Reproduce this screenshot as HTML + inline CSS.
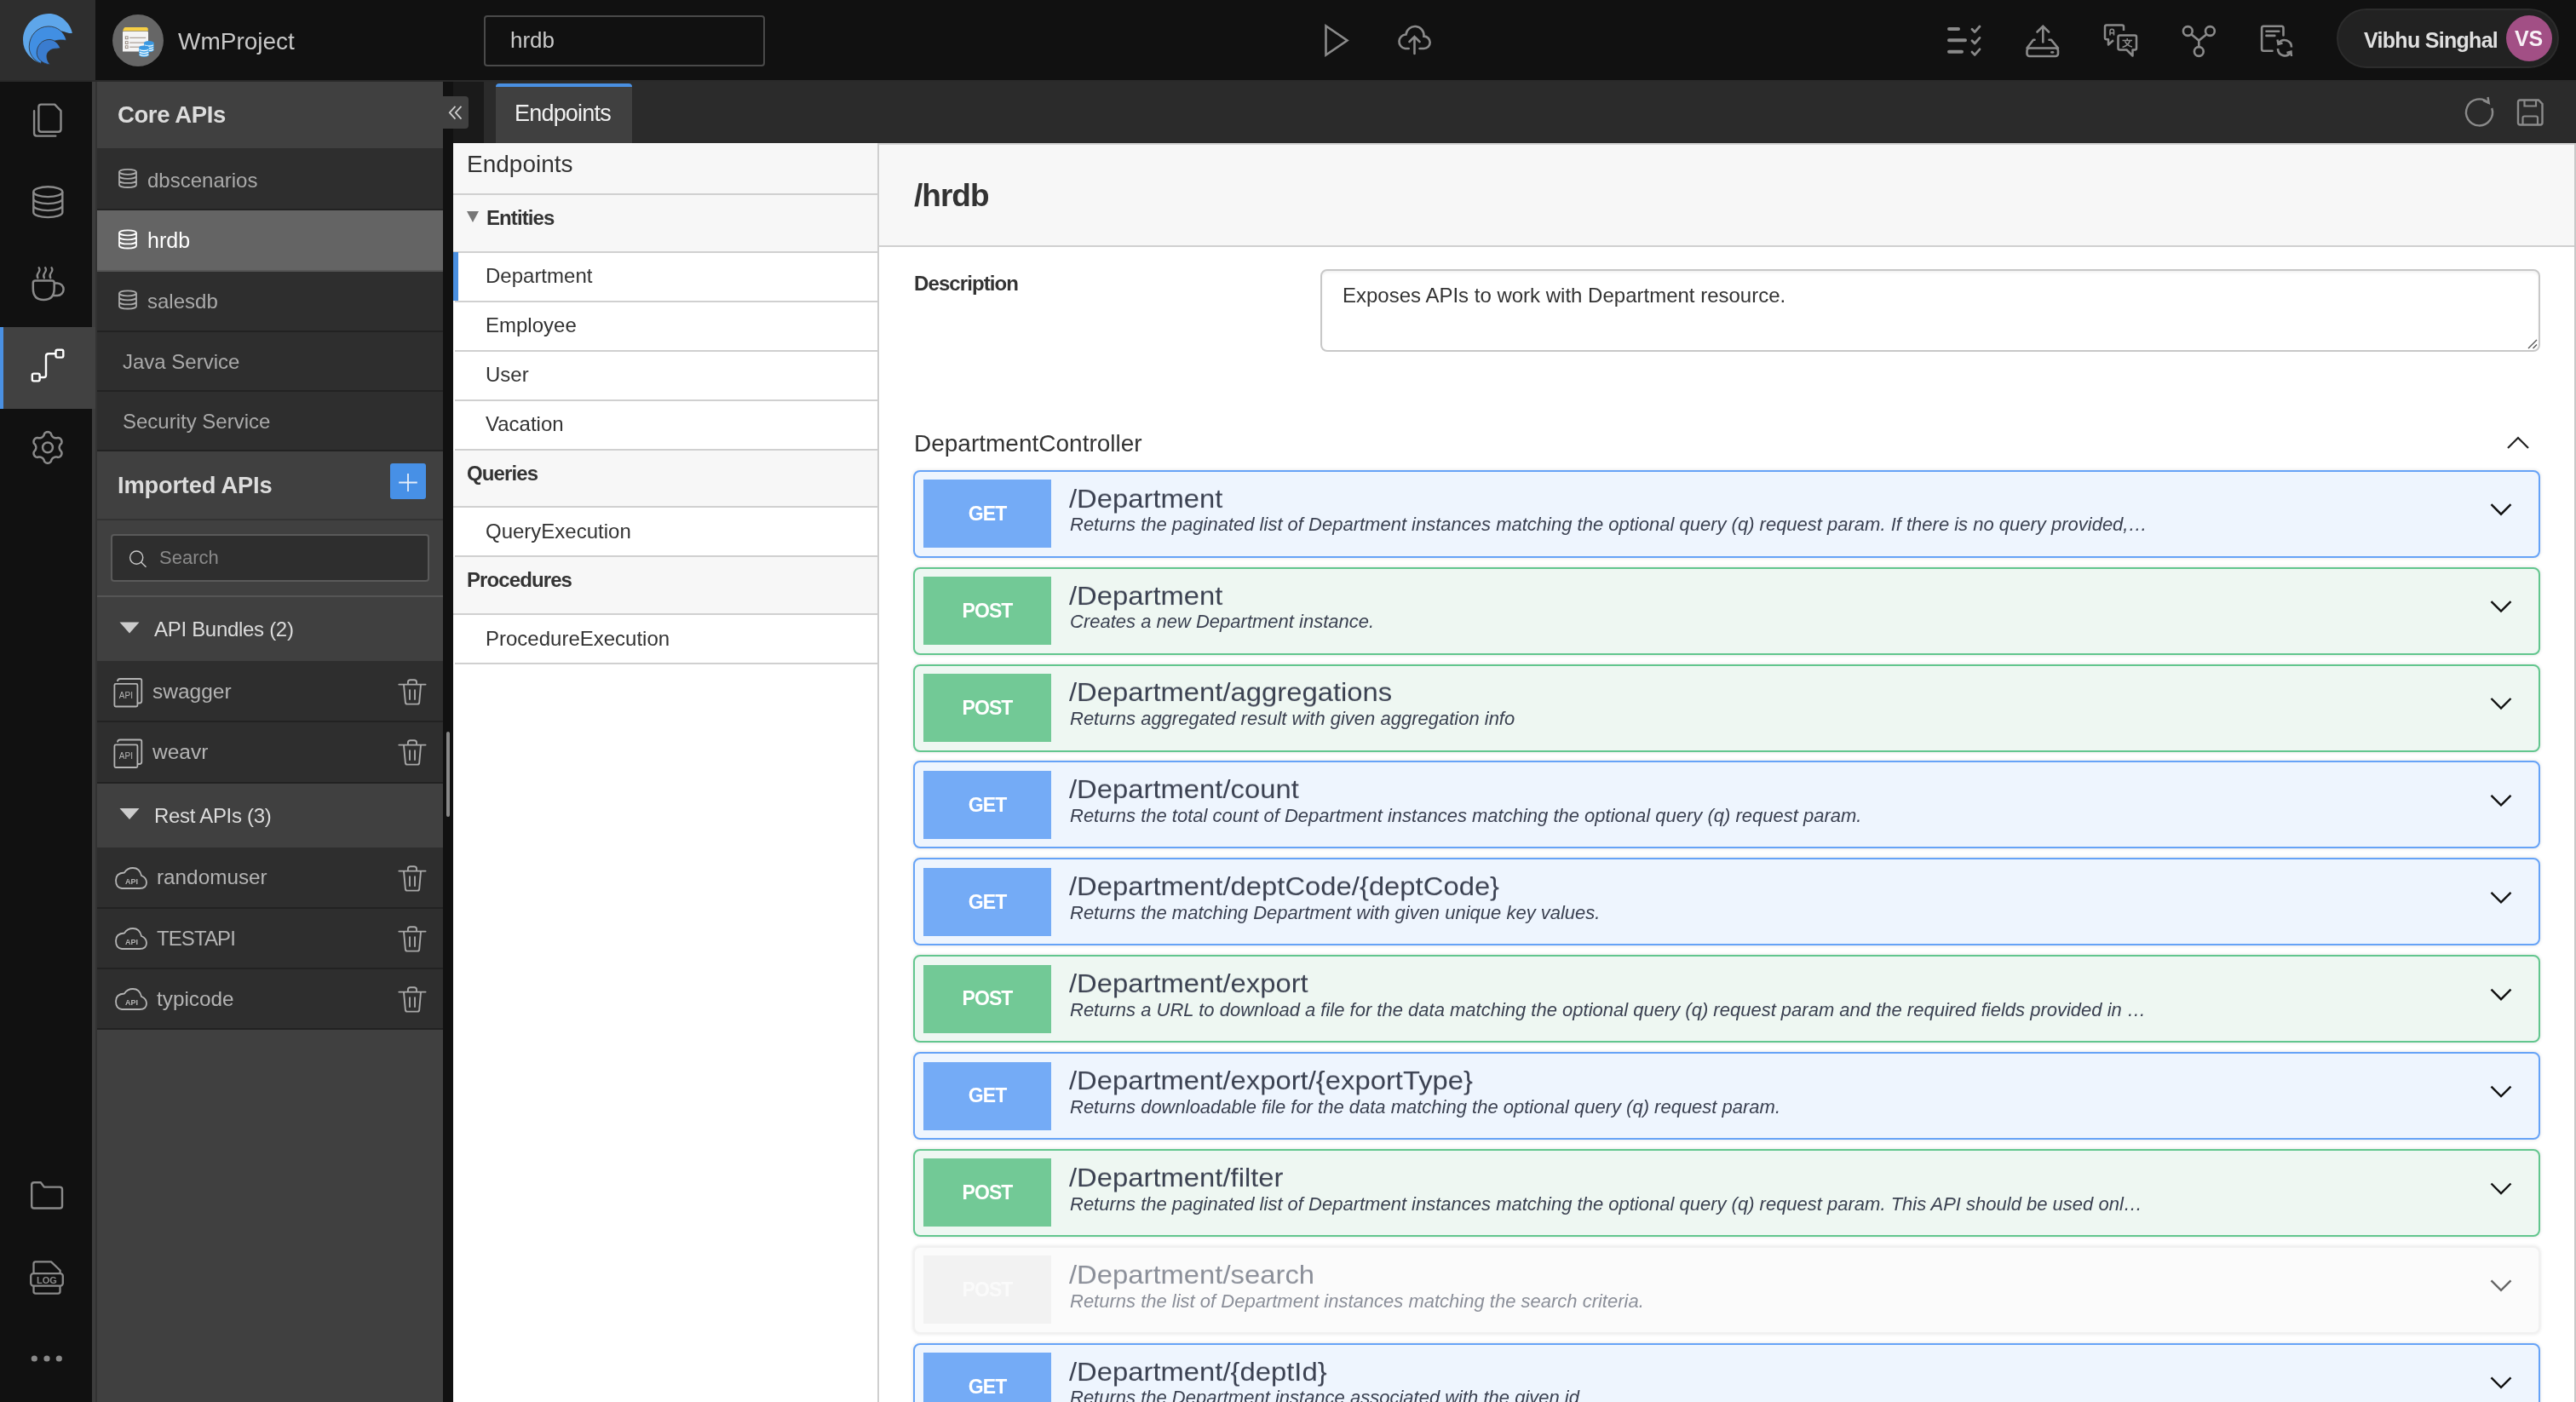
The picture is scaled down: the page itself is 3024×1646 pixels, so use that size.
<!DOCTYPE html>
<html><head><meta charset="utf-8">
<style>
*{margin:0;padding:0;box-sizing:border-box}
html,body{width:3024px;height:1646px;overflow:hidden;background:#111;font-family:"Liberation Sans",sans-serif}
.a{position:absolute}
svg{display:block}
.t{position:absolute;white-space:nowrap;line-height:1;will-change:transform}
</style></head><body>
<div class="a" style="left:0px;top:0px;width:3024px;height:94px;background:#111;"></div>
<div class="a" style="left:0px;top:94px;width:3024px;height:2px;background:#2a2a2a;"></div>
<div class="a" style="left:0px;top:0px;width:112px;height:94px;background:#2e2e2e;"></div>
<div class="a" style="left:132px;top:17px;width:60px;height:61px;border-radius:50%;background:#666"></div>
<div class="t" style="left:209px;top:35.3px;font-size:28px;color:#c8c8c8;font-weight:normal;letter-spacing:0px;font-style:normal;">WmProject</div>
<div class="a" style="left:568px;top:18px;width:330px;height:60px;border:2px solid #4a4a4a;border-radius:4px;background:#111"></div>
<div class="t" style="left:599px;top:34.2px;font-size:26px;color:#c8c8c8;font-weight:normal;letter-spacing:0px;font-style:normal;">hrdb</div>
<div class="a" style="left:2743px;top:10px;width:261px;height:70px;border-radius:35px;background:#222;border:2px solid #2c2c2c"></div>
<div class="t" style="left:2775px;top:35.1px;font-size:25px;color:#e0e0e0;font-weight:bold;letter-spacing:-0.7px;font-style:normal;">Vibhu Singhal</div>
<div class="a" style="left:2942px;top:18px;width:54px;height:54px;border-radius:50%;background:#a24f85"></div>
<div class="t" style="left:2951.5px;top:33.0px;font-size:25px;color:#f8f0f6;font-weight:bold;letter-spacing:-0.2px;font-style:normal;">VS</div>
<div class="a" style="left:0px;top:96px;width:108px;height:1550px;background:#111;"></div>
<div class="a" style="left:108px;top:96px;width:4px;height:1550px;background:#3d3d3d;"></div>
<div class="a" style="left:112px;top:96px;width:2px;height:1550px;background:#333;"></div>
<div class="a" style="left:0px;top:384px;width:112px;height:96px;background:#414141;"></div>
<div class="a" style="left:0px;top:384px;width:4px;height:96px;background:#4a90e2;"></div>
<div class="a" style="left:114px;top:96px;width:406px;height:1550px;background:#404040;"></div>
<div class="t" style="left:138px;top:121.0px;font-size:27.5px;color:#dcdcdc;font-weight:bold;letter-spacing:-0.4px;font-style:normal;">Core APIs</div>
<div class="a" style="left:114px;top:174px;width:406px;height:72px;background:#2e2e2e;"></div>
<div class="a" style="left:114px;top:247px;width:406px;height:70px;background:#646464;"></div>
<div class="a" style="left:114px;top:319px;width:406px;height:69px;background:#2e2e2e;"></div>
<div class="a" style="left:114px;top:390px;width:406px;height:68px;background:#2e2e2e;"></div>
<div class="a" style="left:114px;top:460px;width:406px;height:68px;background:#2e2e2e;"></div>
<div class="a" style="left:114px;top:245px;width:406px;height:2px;background:#222;"></div>
<div class="a" style="left:114px;top:388px;width:406px;height:2px;background:#222;"></div>
<div class="a" style="left:114px;top:458px;width:406px;height:2px;background:#222;"></div>
<div class="a" style="left:114px;top:528px;width:406px;height:2px;background:#222;"></div>
<div class="a" style="left:114px;top:317px;width:406px;height:2px;background:#555;"></div>
<div class="t" style="left:172.5px;top:199.7px;font-size:24px;color:#aaa;font-weight:normal;letter-spacing:0px;font-style:normal;">dbscenarios</div>
<div class="t" style="left:172.5px;top:269.8px;font-size:25px;color:#fff;font-weight:normal;letter-spacing:0px;font-style:normal;">hrdb</div>
<div class="t" style="left:172.5px;top:341.7px;font-size:24px;color:#aaa;font-weight:normal;letter-spacing:0px;font-style:normal;">salesdb</div>
<div class="t" style="left:144px;top:412.5px;font-size:24px;color:#aaa;font-weight:normal;letter-spacing:0px;font-style:normal;">Java Service</div>
<div class="t" style="left:144px;top:482.5px;font-size:24px;color:#aaa;font-weight:normal;letter-spacing:0px;font-style:normal;">Security Service</div>
<div class="a" style="left:114px;top:609px;width:406px;height:2px;background:#333;"></div>
<div class="t" style="left:138px;top:555.6px;font-size:27.3px;color:#dcdcdc;font-weight:bold;letter-spacing:-0.2px;font-style:normal;">Imported APIs</div>
<div class="a" style="left:458px;top:544px;width:42px;height:42px;border-radius:3px;background:#4790e6"></div>
<div class="a" style="left:130px;top:627px;width:374px;height:56px;border:2px solid #5a5a5a;border-radius:4px;background:#2e2e2e"></div>
<div class="t" style="left:186.5px;top:643.9px;font-size:22px;color:#8a8a8a;font-weight:normal;letter-spacing:0px;font-style:normal;">Search</div>
<div class="a" style="left:114px;top:699px;width:406px;height:2px;background:#555;"></div>
<div class="t" style="left:180.5px;top:727.0px;font-size:24px;color:#dcdcdc;font-weight:normal;letter-spacing:-0.3px;font-style:normal;">API Bundles (2)</div>
<div class="a" style="left:114px;top:776px;width:406px;height:70px;background:#2e2e2e;"></div>
<div class="a" style="left:114px;top:848px;width:406px;height:70px;background:#2e2e2e;"></div>
<div class="a" style="left:114px;top:846px;width:406px;height:2px;background:#222;"></div>
<div class="a" style="left:114px;top:918px;width:406px;height:2px;background:#222;"></div>
<div class="t" style="left:178.5px;top:799.5px;font-size:24.5px;color:#b4b4b4;font-weight:normal;letter-spacing:0px;font-style:normal;">swagger</div>
<div class="t" style="left:178.5px;top:870.8px;font-size:24.5px;color:#b4b4b4;font-weight:normal;letter-spacing:0px;font-style:normal;">weavr</div>
<div class="a" style="left:114px;top:995px;width:406px;height:70px;background:#2e2e2e;"></div>
<div class="a" style="left:114px;top:1066px;width:406px;height:70px;background:#2e2e2e;"></div>
<div class="a" style="left:114px;top:1137px;width:406px;height:71px;background:#2e2e2e;"></div>
<div class="a" style="left:114px;top:1065px;width:406px;height:2px;background:#222;"></div>
<div class="a" style="left:114px;top:1136px;width:406px;height:2px;background:#222;"></div>
<div class="a" style="left:114px;top:1207px;width:406px;height:2px;background:#222;"></div>
<div class="t" style="left:180.5px;top:946.2px;font-size:24px;color:#dcdcdc;font-weight:normal;letter-spacing:-0.3px;font-style:normal;">Rest APIs (3)</div>
<div class="t" style="left:184px;top:1018.4px;font-size:24.3px;color:#b4b4b4;font-weight:normal;letter-spacing:0px;font-style:normal;">randomuser</div>
<div class="t" style="left:184px;top:1090.2px;font-size:24px;color:#b4b4b4;font-weight:normal;letter-spacing:-0.9px;font-style:normal;">TESTAPI</div>
<div class="t" style="left:184px;top:1160.9px;font-size:24.3px;color:#b4b4b4;font-weight:normal;letter-spacing:0px;font-style:normal;">typicode</div>
<div class="a" style="left:520px;top:96px;width:12px;height:1550px;background:#111;"></div>
<div class="a" style="left:524px;top:859px;width:4px;height:100px;border-radius:2px;background:#888"></div>
<div class="a" style="left:532px;top:96px;width:36px;height:72px;background:#1a1a1a;"></div>
<div class="a" style="left:568px;top:96px;width:2456px;height:72px;background:#2b2b2b;"></div>
<div class="a" style="left:582px;top:98px;width:160px;height:70px;background:#404040;border-top:4px solid #4a90e2;border-radius:4px 4px 0 0"></div>
<div class="t" style="left:604px;top:120.3px;font-size:27px;color:#f0f0f0;font-weight:normal;letter-spacing:-0.8px;font-style:normal;">Endpoints</div>
<div class="a" style="left:520px;top:113px;width:30px;height:38px;border-radius:0 4px 4px 0;background:#404040"></div>
<div class="a" style="left:532px;top:168px;width:499px;height:1478px;background:#fff;"></div>
<div class="a" style="left:532px;top:168px;width:498px;height:61px;background:#f7f7f7;"></div>
<div class="a" style="left:532px;top:227px;width:498px;height:2px;background:#d0d0d0;"></div>
<div class="t" style="left:548.3px;top:179.4px;font-size:28px;color:#333;font-weight:normal;letter-spacing:0px;font-style:normal;">Endpoints</div>
<div class="a" style="left:532px;top:229px;width:498px;height:66px;background:#f7f7f7;"></div>
<div class="a" style="left:532px;top:295px;width:498px;height:2px;background:#d0d0d0;"></div>
<svg class="a" style="left:546px;top:246px" width="18" height="17"><path d="M2,2 L16,2 L9,15 Z" fill="#777"/></svg>
<div class="t" style="left:571px;top:243.9px;font-size:24px;color:#333;font-weight:bold;letter-spacing:-0.9px;font-style:normal;">Entities</div>
<div class="t" style="left:570.2px;top:311.9px;font-size:24px;color:#333;font-weight:normal;letter-spacing:0px;font-style:normal;">Department</div>
<div class="a" style="left:534px;top:353px;width:496px;height:2px;background:#d0d0d0;"></div>
<div class="t" style="left:570.2px;top:369.9px;font-size:24px;color:#333;font-weight:normal;letter-spacing:0px;font-style:normal;">Employee</div>
<div class="a" style="left:534px;top:411px;width:496px;height:2px;background:#d0d0d0;"></div>
<div class="t" style="left:570.2px;top:427.9px;font-size:24px;color:#333;font-weight:normal;letter-spacing:0px;font-style:normal;">User</div>
<div class="a" style="left:534px;top:469px;width:496px;height:2px;background:#d0d0d0;"></div>
<div class="t" style="left:570.2px;top:485.9px;font-size:24px;color:#333;font-weight:normal;letter-spacing:0px;font-style:normal;">Vacation</div>
<div class="a" style="left:534px;top:527px;width:496px;height:2px;background:#d0d0d0;"></div>
<div class="a" style="left:532px;top:296px;width:6px;height:57px;background:#4a90e2;"></div>
<div class="a" style="left:532px;top:529px;width:498px;height:65px;background:#f7f7f7;"></div>
<div class="a" style="left:532px;top:594px;width:498px;height:2px;background:#d0d0d0;"></div>
<div class="t" style="left:548px;top:543.7px;font-size:24px;color:#333;font-weight:bold;letter-spacing:-0.9px;font-style:normal;">Queries</div>
<div class="t" style="left:570.2px;top:612.1px;font-size:24px;color:#333;font-weight:normal;letter-spacing:0px;font-style:normal;">QueryExecution</div>
<div class="a" style="left:534px;top:652px;width:496px;height:2px;background:#d0d0d0;"></div>
<div class="a" style="left:532px;top:654px;width:498px;height:66px;background:#f7f7f7;"></div>
<div class="a" style="left:532px;top:720px;width:498px;height:2px;background:#d0d0d0;"></div>
<div class="t" style="left:548px;top:669.2px;font-size:24px;color:#333;font-weight:bold;letter-spacing:-0.9px;font-style:normal;">Procedures</div>
<div class="t" style="left:570.2px;top:737.7px;font-size:24px;color:#333;font-weight:normal;letter-spacing:0px;font-style:normal;">ProcedureExecution</div>
<div class="a" style="left:534px;top:778px;width:496px;height:2px;background:#d0d0d0;"></div>
<div class="a" style="left:1030px;top:168px;width:2px;height:1478px;background:#cfcfcf;"></div>
<div class="a" style="left:1032px;top:168px;width:1990px;height:1478px;background:#fff;"></div>
<div class="a" style="left:1032px;top:168px;width:1990px;height:120px;background:#f7f7f7;"></div>
<div class="a" style="left:1032px;top:288px;width:1990px;height:2px;background:#d0d0d0;"></div>
<div class="a" style="left:1032px;top:168px;width:1990px;height:2px;background:#d4d4d4;"></div>
<div class="a" style="left:3022px;top:168px;width:2px;height:1478px;background:#c8c8c8;"></div>
<div class="t" style="left:1073px;top:211.4px;font-size:37px;color:#333;font-weight:bold;letter-spacing:-1px;font-style:normal;">/hrdb</div>
<div class="t" style="left:1073px;top:320.9px;font-size:24px;color:#333;font-weight:bold;letter-spacing:-0.9px;font-style:normal;">Description</div>
<div class="a" style="left:1550px;top:316px;width:1432px;height:97px;border:2px solid #c8c8c8;border-radius:8px;background:#fff;box-shadow:inset 0 2px 3px rgba(0,0,0,.06)"></div>
<div class="t" style="left:1576px;top:335.1px;font-size:24px;color:#333;font-weight:normal;letter-spacing:0px;font-style:normal;">Exposes APIs to work with Department resource.</div>
<div class="t" style="left:1073px;top:507.2px;font-size:28px;color:#333;font-weight:normal;letter-spacing:0px;font-style:normal;">DepartmentController</div>
<div class="a" style="left:1072px;top:551.7px;width:1910px;height:103px;border:2px solid #66a3f7;border-radius:8px;background:#eef5fe;box-shadow:0 0 4px rgba(0,0,0,.12);"></div>
<div class="a" style="left:1084px;top:563.1px;width:150px;height:80px;background:#74abf6;"></div>
<div class="t" style="left:1159px;top:591.9px;font-size:23px;color:#fff;font-weight:bold;letter-spacing:-0.9px;font-style:normal;transform:translateX(-50%)">GET</div>
<div class="t" style="left:1255px;top:568.6px;font-size:32.8px;color:#3b4151;font-weight:normal;letter-spacing:0px;font-style:normal;transform:scaleY(0.92);transform-origin:0 84.65%">/Department</div>
<div class="t" style="left:1256px;top:605.3px;font-size:22px;color:#3b4151;font-weight:normal;letter-spacing:0px;font-style:italic;">Returns the paginated list of Department instances matching the optional query (q) request param. If there is no query provided,…</div>
<div class="a" style="left:1072px;top:665.6px;width:1910px;height:103px;border:2px solid #62c68e;border-radius:8px;background:#eef7f2;box-shadow:0 0 4px rgba(0,0,0,.12);"></div>
<div class="a" style="left:1084px;top:677.0px;width:150px;height:80px;background:#72c996;"></div>
<div class="t" style="left:1159px;top:705.8px;font-size:23px;color:#fff;font-weight:bold;letter-spacing:-0.9px;font-style:normal;transform:translateX(-50%)">POST</div>
<div class="t" style="left:1255px;top:682.5px;font-size:32.8px;color:#3b4151;font-weight:normal;letter-spacing:0px;font-style:normal;transform:scaleY(0.92);transform-origin:0 84.65%">/Department</div>
<div class="t" style="left:1256px;top:719.2px;font-size:22px;color:#3b4151;font-weight:normal;letter-spacing:0px;font-style:italic;">Creates a new Department instance.</div>
<div class="a" style="left:1072px;top:779.5px;width:1910px;height:103px;border:2px solid #62c68e;border-radius:8px;background:#eef7f2;box-shadow:0 0 4px rgba(0,0,0,.12);"></div>
<div class="a" style="left:1084px;top:790.9px;width:150px;height:80px;background:#72c996;"></div>
<div class="t" style="left:1159px;top:819.7px;font-size:23px;color:#fff;font-weight:bold;letter-spacing:-0.9px;font-style:normal;transform:translateX(-50%)">POST</div>
<div class="t" style="left:1255px;top:796.4px;font-size:32.8px;color:#3b4151;font-weight:normal;letter-spacing:0px;font-style:normal;transform:scaleY(0.92);transform-origin:0 84.65%">/Department/aggregations</div>
<div class="t" style="left:1256px;top:833.1px;font-size:22px;color:#3b4151;font-weight:normal;letter-spacing:0px;font-style:italic;">Returns aggregated result with given aggregation info</div>
<div class="a" style="left:1072px;top:893.4px;width:1910px;height:103px;border:2px solid #66a3f7;border-radius:8px;background:#eef5fe;box-shadow:0 0 4px rgba(0,0,0,.12);"></div>
<div class="a" style="left:1084px;top:904.8px;width:150px;height:80px;background:#74abf6;"></div>
<div class="t" style="left:1159px;top:933.6px;font-size:23px;color:#fff;font-weight:bold;letter-spacing:-0.9px;font-style:normal;transform:translateX(-50%)">GET</div>
<div class="t" style="left:1255px;top:910.3px;font-size:32.8px;color:#3b4151;font-weight:normal;letter-spacing:0px;font-style:normal;transform:scaleY(0.92);transform-origin:0 84.65%">/Department/count</div>
<div class="t" style="left:1256px;top:947.0px;font-size:22px;color:#3b4151;font-weight:normal;letter-spacing:0px;font-style:italic;">Returns the total count of Department instances matching the optional query (q) request param.</div>
<div class="a" style="left:1072px;top:1007.3px;width:1910px;height:103px;border:2px solid #66a3f7;border-radius:8px;background:#eef5fe;box-shadow:0 0 4px rgba(0,0,0,.12);"></div>
<div class="a" style="left:1084px;top:1018.7px;width:150px;height:80px;background:#74abf6;"></div>
<div class="t" style="left:1159px;top:1047.5px;font-size:23px;color:#fff;font-weight:bold;letter-spacing:-0.9px;font-style:normal;transform:translateX(-50%)">GET</div>
<div class="t" style="left:1255px;top:1024.2px;font-size:32.8px;color:#3b4151;font-weight:normal;letter-spacing:0px;font-style:normal;transform:scaleY(0.92);transform-origin:0 84.65%">/Department/deptCode/{deptCode}</div>
<div class="t" style="left:1256px;top:1060.9px;font-size:22px;color:#3b4151;font-weight:normal;letter-spacing:0px;font-style:italic;">Returns the matching Department with given unique key values.</div>
<div class="a" style="left:1072px;top:1121.2px;width:1910px;height:103px;border:2px solid #62c68e;border-radius:8px;background:#eef7f2;box-shadow:0 0 4px rgba(0,0,0,.12);"></div>
<div class="a" style="left:1084px;top:1132.6px;width:150px;height:80px;background:#72c996;"></div>
<div class="t" style="left:1159px;top:1161.4px;font-size:23px;color:#fff;font-weight:bold;letter-spacing:-0.9px;font-style:normal;transform:translateX(-50%)">POST</div>
<div class="t" style="left:1255px;top:1138.1px;font-size:32.8px;color:#3b4151;font-weight:normal;letter-spacing:0px;font-style:normal;transform:scaleY(0.92);transform-origin:0 84.65%">/Department/export</div>
<div class="t" style="left:1256px;top:1174.8px;font-size:22px;color:#3b4151;font-weight:normal;letter-spacing:0px;font-style:italic;">Returns a URL to download a file for the data matching the optional query (q) request param and the required fields provided in …</div>
<div class="a" style="left:1072px;top:1235.1px;width:1910px;height:103px;border:2px solid #66a3f7;border-radius:8px;background:#eef5fe;box-shadow:0 0 4px rgba(0,0,0,.12);"></div>
<div class="a" style="left:1084px;top:1246.5px;width:150px;height:80px;background:#74abf6;"></div>
<div class="t" style="left:1159px;top:1275.3px;font-size:23px;color:#fff;font-weight:bold;letter-spacing:-0.9px;font-style:normal;transform:translateX(-50%)">GET</div>
<div class="t" style="left:1255px;top:1252.0px;font-size:32.8px;color:#3b4151;font-weight:normal;letter-spacing:0px;font-style:normal;transform:scaleY(0.92);transform-origin:0 84.65%">/Department/export/{exportType}</div>
<div class="t" style="left:1256px;top:1288.7px;font-size:22px;color:#3b4151;font-weight:normal;letter-spacing:0px;font-style:italic;">Returns downloadable file for the data matching the optional query (q) request param.</div>
<div class="a" style="left:1072px;top:1349.0px;width:1910px;height:103px;border:2px solid #62c68e;border-radius:8px;background:#eef7f2;box-shadow:0 0 4px rgba(0,0,0,.12);"></div>
<div class="a" style="left:1084px;top:1360.4px;width:150px;height:80px;background:#72c996;"></div>
<div class="t" style="left:1159px;top:1389.2px;font-size:23px;color:#fff;font-weight:bold;letter-spacing:-0.9px;font-style:normal;transform:translateX(-50%)">POST</div>
<div class="t" style="left:1255px;top:1365.9px;font-size:32.8px;color:#3b4151;font-weight:normal;letter-spacing:0px;font-style:normal;transform:scaleY(0.92);transform-origin:0 84.65%">/Department/filter</div>
<div class="t" style="left:1256px;top:1402.6px;font-size:22px;color:#3b4151;font-weight:normal;letter-spacing:0px;font-style:italic;">Returns the paginated list of Department instances matching the optional query (q) request param. This API should be used onl…</div>
<div class="a" style="left:1072px;top:1462.9px;width:1910px;height:103px;border:2px solid #f1f1f1;border-radius:8px;background:#fbfbfb;box-shadow:0 0 4px rgba(0,0,0,.12);"></div>
<div class="a" style="left:1084px;top:1474.3px;width:150px;height:80px;background:#f2f2f2;"></div>
<div class="t" style="left:1159px;top:1503.1px;font-size:23px;color:#fafafa;font-weight:bold;letter-spacing:-0.9px;font-style:normal;transform:translateX(-50%)">POST</div>
<div class="t" style="left:1255px;top:1479.8px;font-size:32.8px;color:#8b8f99;font-weight:normal;letter-spacing:0px;font-style:normal;transform:scaleY(0.92);transform-origin:0 84.65%">/Department/search</div>
<div class="t" style="left:1256px;top:1516.5px;font-size:22px;color:#8b8f99;font-weight:normal;letter-spacing:0px;font-style:italic;">Returns the list of Department instances matching the search criteria.</div>
<div class="a" style="left:1072px;top:1576.8px;width:1910px;height:103px;border:2px solid #66a3f7;border-radius:8px;background:#eef5fe;box-shadow:0 0 4px rgba(0,0,0,.12);"></div>
<div class="a" style="left:1084px;top:1588.2px;width:150px;height:80px;background:#74abf6;"></div>
<div class="t" style="left:1159px;top:1617.0px;font-size:23px;color:#fff;font-weight:bold;letter-spacing:-0.9px;font-style:normal;transform:translateX(-50%)">GET</div>
<div class="t" style="left:1255px;top:1593.7px;font-size:32.8px;color:#3b4151;font-weight:normal;letter-spacing:0px;font-style:normal;transform:scaleY(0.92);transform-origin:0 84.65%">/Department/{deptId}</div>
<div class="t" style="left:1256px;top:1630.4px;font-size:22px;color:#3b4151;font-weight:normal;letter-spacing:0px;font-style:italic;">Returns the Department instance associated with the given id</div>
<svg class="a" style="left:0;top:0" width="3024" height="1646"><path d="M1556.5,30.5 L1556.5,64.5 L1581.5,47.5 Z" fill="none" stroke="#8a8a8a" stroke-width="2.6" stroke-linejoin="miter"/>
<path d="M1653.7,57 H1649.5 A8.3,8.3 0 0 1 1650.5,40.5 A10.5,10.5 0 0 1 1671.5,42.6 A7.2,7.2 0 0 1 1671.5,57 H1666.5" fill="none" stroke="#8a8a8a" stroke-width="2.6" stroke-linecap="round"/>
<path d="M1660.5,63 L1660.5,43 M1654.5,49 L1660.5,43 L1666.5,49" fill="none" stroke="#8a8a8a" stroke-width="2.6" stroke-linecap="round"/>
<path d="M2288,34 H2299 M2288,47.3 H2307 M2288,60.7 H2303" stroke="#8a8a8a" stroke-width="4" stroke-linecap="round"/>
<path d="M2315,34.3 L2318.2,37.6 L2324,31" fill="none" stroke="#8a8a8a" stroke-width="2.8" stroke-linecap="round" stroke-linejoin="round"/>
<path d="M2315,47.699999999999996 L2318.2,51.0 L2324,44.4" fill="none" stroke="#8a8a8a" stroke-width="2.8" stroke-linecap="round" stroke-linejoin="round"/>
<path d="M2315,61.099999999999994 L2318.2,64.4 L2324,57.8" fill="none" stroke="#8a8a8a" stroke-width="2.8" stroke-linecap="round" stroke-linejoin="round"/>
<path d="M2398.3,49.5 V31 M2391.5,37.5 L2398.3,30.8 L2405.1,37.5" fill="none" stroke="#8a8a8a" stroke-width="2.6" stroke-linecap="round"/>
<path d="M2388.5,46.8 H2387 L2379.5,56.5 M2405.5,46.8 H2408 L2416,56.5" fill="none" stroke="#8a8a8a" stroke-width="2.6" stroke-linecap="round" stroke-linejoin="round"/>
<rect x="2379.5" y="56.5" width="36.5" height="9.5" rx="3" fill="none" stroke="#8a8a8a" stroke-width="2.6"/>
<ellipse cx="2409.2" cy="61.4" rx="2.2" ry="1.3" fill="#8a8a8a"/>
<path d="M2493,36 V31.5 Q2493,29.5 2491,29.5 H2473 Q2471,29.5 2471,31.5 V44.5 Q2471,46.3 2473,46.3 H2475 V52.5 L2481,47.3" fill="none" stroke="#8a8a8a" stroke-width="2.5" stroke-linejoin="round"/>
<path d="M2477,41.5 V36.5 Q2477,34.2 2479.2,34.2 Q2481.5,34.2 2481.5,36.5 V41.5 M2477,38.8 H2481.5" fill="none" stroke="#8a8a8a" stroke-width="1.6"/>
<path d="M2488.5,41.5 H2506 Q2508,41.5 2508,43.5 V56.5 Q2508,58.5 2506,58.5 H2503.5 V65.5 L2496.5,58.5 H2488.5 Q2486.5,58.5 2486.5,56.5 V43.5 Q2486.5,41.5 2488.5,41.5 Z" fill="none" stroke="#8a8a8a" stroke-width="2.5" stroke-linejoin="round"/>
<path d="M2491.5,47.5 H2503 M2497.2,45 V47.5 M2500.5,47.5 Q2498.5,53.5 2491.5,55.5 M2494.5,48.5 Q2497,53.5 2503,55" fill="none" stroke="#8a8a8a" stroke-width="1.6"/>
<circle cx="2568.3" cy="36.5" r="5.4" fill="none" stroke="#8a8a8a" stroke-width="2.6"/>
<circle cx="2594.4" cy="36.5" r="5.4" fill="none" stroke="#8a8a8a" stroke-width="2.6"/>
<circle cx="2581.3" cy="60.5" r="5.4" fill="none" stroke="#8a8a8a" stroke-width="2.6"/>
<path d="M2572.3,40.3 L2581.3,47.5 L2590.4,40.3 M2581.3,47.5 V55" fill="none" stroke="#8a8a8a" stroke-width="2.6"/>
<path d="M2680.5,41.5 V33 Q2680.5,30.8 2678.3,30.8 H2657.3 Q2655.1,30.8 2655.1,33 V57.5 Q2655.1,59.7 2657.3,59.7 H2667.5" fill="none" stroke="#8a8a8a" stroke-width="2.6" stroke-linecap="round"/>
<path d="M2660.5,36.8 H2675.3 M2660.5,41.9 H2670.3" stroke="#8a8a8a" stroke-width="2.6" stroke-linecap="round"/>
<path d="M2690,55.5 A8.3,8.3 0 0 0 2675,50.5 M2674,57 A8.3,8.3 0 0 0 2689,62" fill="none" stroke="#8a8a8a" stroke-width="2.6"/>
<path d="M2673.5,46.5 L2674.5,52 L2679.5,50.5 M2690,66 L2689.5,60.5 L2684.5,62" fill="none" stroke="#8a8a8a" stroke-width="2.4" stroke-linejoin="miter"/>
<path d="M2921.5,121 A15.5,15.5 0 1 0 2925.2,127" fill="none" stroke="#8a8a8a" stroke-width="2.4"/>
<path d="M2915,118 L2921.7,121 L2920.5,114" fill="none" stroke="#8a8a8a" stroke-width="2.4"/>
<path d="M2958.5,117.5 H2980 L2984.5,122 V144 Q2984.5,146.5 2982,146.5 H2958.5 Q2956,146.5 2956,144 V120 Q2956,117.5 2958.5,117.5 Z" fill="none" stroke="#8a8a8a" stroke-width="2.4"/>
<path d="M2963.5,118 V124.5 H2977 V118 M2961.5,146 V138.5 Q2961.5,136.5 2963.5,136.5 H2977 Q2979,136.5 2979,138.5 V146" fill="none" stroke="#8a8a8a" stroke-width="2.2"/>
<g transform="translate(20,10) scale(0.04993)">
<path d="M1300,575 C1250,330 1010,120 750,120 C390,120 140,420 140,740 C140,1010 330,1210 560,1290 L720,700 C900,500 1040,520 1110,545 C1190,575 1250,590 1300,575 Z" fill="#5ea6ea"/>
<path d="M1160,750 C1120,560 950,420 740,420 C480,420 285,640 285,900 C285,1070 390,1220 560,1290 L700,880 C820,760 960,720 1160,750 Z" fill="#418fe3" stroke="#2e2e2e" stroke-width="16"/>
<path d="M1015,925 C970,820 880,730 760,730 C590,730 465,870 465,1040 C465,1190 600,1300 780,1320 C720,1250 700,1180 700,1120 C700,1020 790,950 900,945 C950,943 990,938 1015,925 Z" fill="#3a7ccf" stroke="#2e2e2e" stroke-width="16"/>
</g>
<path d="M144,60.5 V38 Q144,36.8 145.2,36.8 H172.8 Q174,36.8 174,38 V60.5 Z" fill="#f4f4f4"/>
<path d="M144,36.2 L145.5,33 Q146,32 147.2,32 H171.5 Q173,32 173.5,33.2 L174,36.2 Z" fill="#f6cf45"/>
<rect x="147.3" y="42.9" width="2.8" height="2.8" fill="#fff" stroke="#8a7d72" stroke-width="0.9"/>
<path d="M152.2,44.3 H171.2" stroke="#9a8c80" stroke-width="1"/>
<rect x="147.3" y="48.7" width="2.8" height="2.8" fill="#fff" stroke="#8a7d72" stroke-width="0.9"/>
<path d="M152.2,50.1 H171.2" stroke="#9a8c80" stroke-width="1"/>
<rect x="147.3" y="53.800000000000004" width="2.8" height="2.8" fill="#fff" stroke="#8a7d72" stroke-width="0.9"/>
<path d="M152.2,55.2 H171.2" stroke="#9a8c80" stroke-width="1"/>
<path d="M169.0,50.3 V59.0 A5.8,2.2 0 0 0 180.60000000000002,59.0 V50.3 Z" fill="#4aa8ea"/>
<path d="M169.6,52.9 A5.8,2.2 0 0 0 180.00000000000003,52.9" fill="none" stroke="#fff" stroke-width="1.1"/>
<path d="M169.6,55.6 A5.8,2.2 0 0 0 180.00000000000003,55.6" fill="none" stroke="#fff" stroke-width="1.1"/>
<path d="M169.6,58.2 A5.8,2.2 0 0 0 180.00000000000003,58.2" fill="none" stroke="#fff" stroke-width="1.1"/>
<ellipse cx="174.8" cy="50.3" rx="5.8" ry="2.2" fill="#3b97e0"/>
<path d="M163.2,55.6 V64.8 A5.8,2.2 0 0 0 174.8,64.8 V55.6 Z" fill="#4aa8ea"/>
<path d="M163.79999999999998,58.4 A5.8,2.2 0 0 0 174.20000000000002,58.4" fill="none" stroke="#fff" stroke-width="1.1"/>
<path d="M163.79999999999998,61.2 A5.8,2.2 0 0 0 174.20000000000002,61.2" fill="none" stroke="#fff" stroke-width="1.1"/>
<path d="M163.79999999999998,64.0 A5.8,2.2 0 0 0 174.20000000000002,64.0" fill="none" stroke="#fff" stroke-width="1.1"/>
<ellipse cx="169" cy="55.6" rx="5.8" ry="2.2" fill="#3b97e0"/>
<path d="M48.4,122.6 H64.2 L71.5,130.1 V151.7 Q71.5,154.7 68.5,154.7 H48.4 Q45.4,154.7 45.4,151.7 V125.6 Q45.4,122.6 48.4,122.6 Z" fill="none" stroke="#8a8a8a" stroke-width="2.4" stroke-linejoin="round"/>
<path d="M40.1,130.2 V156.6 Q40.1,159.6 43.1,159.6 H65.3" fill="none" stroke="#8a8a8a" stroke-width="2.4" stroke-linecap="round"/>
<ellipse cx="56.3" cy="225.2" rx="17" ry="5.9" fill="none" stroke="#8a8a8a" stroke-width="2.4"/>
<path d="M39.3,225.2 V249.2 A17,5.9 0 0 0 73.3,249.2 V225.2 M39.3,233.2 A17,5.9 0 0 0 73.3,233.2 M39.3,241.2 A17,5.9 0 0 0 73.3,241.2" fill="none" stroke="#8a8a8a" stroke-width="2.4"/>
<path d="M41.6,329.6 H61 Q63.7,329.6 63.7,332.3 V338.5 Q63.7,352 51.2,352 Q38.8,352 38.8,338.5 V332.3 Q38.8,329.6 41.6,329.6 Z" fill="none" stroke="#8a8a8a" stroke-width="2.5" stroke-linejoin="round"/>
<path d="M63.7,332.4 H67.3 A7.3,7.3 0 0 1 67.3,347 H61.8" fill="none" stroke="#8a8a8a" stroke-width="2.5"/>
<path d="M45.6,314.3 C47.4,316.6 46.4,318.6 44.800000000000004,320.6 C43.300000000000004,322.6 43.4,324.6 44.4,326.3" fill="none" stroke="#8a8a8a" stroke-width="2.3" stroke-linecap="round"/>
<path d="M53.1,314.3 C54.9,316.6 53.9,318.6 52.300000000000004,320.6 C50.800000000000004,322.6 50.9,324.6 51.9,326.3" fill="none" stroke="#8a8a8a" stroke-width="2.3" stroke-linecap="round"/>
<path d="M60.5,314.3 C62.3,316.6 61.3,318.6 59.7,320.6 C58.2,322.6 58.3,324.6 59.3,326.3" fill="none" stroke="#8a8a8a" stroke-width="2.3" stroke-linecap="round"/>
<rect x="37.8" y="438.6" width="8.8" height="8.8" rx="1.8" fill="none" stroke="#fff" stroke-width="2.4"/>
<rect x="65.5" y="410.8" width="8.8" height="8.8" rx="1.8" fill="none" stroke="#fff" stroke-width="2.4"/>
<path d="M46.6,443 H51.5 Q54,443 54,440.5 V418.2 Q54,415.2 57,415.2 H65.5" fill="none" stroke="#fff" stroke-width="2.4"/>
<path d="M69.70,525.40 L69.72,525.88 L69.80,526.36 L69.92,526.86 L70.09,527.38 L70.31,527.92 L70.60,528.50 L71.01,529.14 L71.89,529.96 L72.24,530.68 L72.41,531.37 L72.48,532.06 L72.45,532.72 L72.33,533.36 L72.13,533.98 L71.85,534.55 L71.49,535.08 L71.06,535.56 L70.57,535.98 L70.00,536.34 L69.38,536.63 L68.69,536.82 L67.89,536.88 L66.75,536.53 L65.99,536.49 L65.34,536.53 L64.76,536.61 L64.23,536.72 L63.73,536.87 L63.28,537.05 L62.85,537.26 L62.45,537.53 L62.06,537.83 L61.69,538.19 L61.33,538.59 L60.97,539.06 L60.61,539.60 L60.26,540.27 L60.00,541.44 L59.55,542.10 L59.03,542.60 L58.47,543.00 L57.88,543.31 L57.27,543.52 L56.64,543.66 L56.00,543.70 L55.36,543.66 L54.73,543.52 L54.12,543.31 L53.53,543.00 L52.97,542.60 L52.45,542.10 L52.00,541.44 L51.74,540.27 L51.39,539.60 L51.03,539.06 L50.67,538.59 L50.31,538.19 L49.94,537.83 L49.55,537.53 L49.15,537.26 L48.72,537.05 L48.27,536.87 L47.77,536.72 L47.24,536.61 L46.66,536.53 L46.01,536.49 L45.25,536.53 L44.11,536.88 L43.31,536.82 L42.62,536.63 L42.00,536.34 L41.43,535.98 L40.94,535.56 L40.51,535.08 L40.15,534.55 L39.87,533.98 L39.67,533.36 L39.55,532.72 L39.52,532.06 L39.59,531.37 L39.76,530.68 L40.11,529.96 L40.99,529.14 L41.40,528.50 L41.69,527.92 L41.91,527.38 L42.08,526.86 L42.20,526.36 L42.28,525.88 L42.30,525.40 L42.28,524.92 L42.20,524.44 L42.08,523.94 L41.91,523.42 L41.69,522.88 L41.40,522.30 L40.99,521.66 L40.11,520.84 L39.76,520.12 L39.59,519.43 L39.52,518.74 L39.55,518.08 L39.67,517.44 L39.87,516.82 L40.15,516.25 L40.51,515.72 L40.94,515.24 L41.43,514.82 L42.00,514.46 L42.62,514.17 L43.31,513.98 L44.11,513.92 L45.25,514.27 L46.01,514.31 L46.66,514.27 L47.24,514.19 L47.77,514.08 L48.27,513.93 L48.72,513.75 L49.15,513.54 L49.55,513.27 L49.94,512.97 L50.31,512.61 L50.67,512.21 L51.03,511.74 L51.39,511.20 L51.74,510.53 L52.00,509.36 L52.45,508.70 L52.97,508.20 L53.53,507.80 L54.12,507.49 L54.73,507.28 L55.36,507.14 L56.00,507.10 L56.64,507.14 L57.27,507.28 L57.88,507.49 L58.47,507.80 L59.03,508.20 L59.55,508.70 L60.00,509.36 L60.26,510.53 L60.61,511.20 L60.97,511.74 L61.33,512.21 L61.69,512.61 L62.06,512.97 L62.45,513.27 L62.85,513.54 L63.28,513.75 L63.73,513.93 L64.23,514.08 L64.76,514.19 L65.34,514.27 L65.99,514.31 L66.75,514.27 L67.89,513.92 L68.69,513.98 L69.38,514.17 L70.00,514.46 L70.57,514.82 L71.06,515.24 L71.49,515.72 L71.85,516.25 L72.13,516.82 L72.33,517.44 L72.45,518.08 L72.48,518.74 L72.41,519.43 L72.24,520.12 L71.89,520.84 L71.01,521.66 L70.60,522.30 L70.31,522.88 L70.09,523.42 L69.92,523.94 L69.80,524.44 L69.72,524.92 Z" fill="none" stroke="#8a8a8a" stroke-width="2.5" stroke-linejoin="round"/>
<circle cx="56" cy="525.4" r="5.9" fill="none" stroke="#8a8a8a" stroke-width="2.5"/>
<path d="M37.2,1391 Q37.2,1388.2 40,1388.2 H47.8 L51.8,1393.6 H70.2 Q73,1393.6 73,1396.4 V1415.7 Q73,1418.5 70.2,1418.5 H40 Q37.2,1418.5 37.2,1415.7 Z" fill="none" stroke="#8a8a8a" stroke-width="2.4" stroke-linejoin="round"/>
<path d="M39.5,1494.5 V1483.6 Q39.5,1481.3 41.8,1481.3 H60 L70.6,1491.5 V1494.5" fill="none" stroke="#8a8a8a" stroke-width="2.3" stroke-linejoin="round"/>
<path d="M39.5,1509.8 V1516.3 Q39.5,1518.6 41.8,1518.6 H68.2 Q70.5,1518.6 70.5,1516.3 V1509.8" fill="none" stroke="#8a8a8a" stroke-width="2.3"/>
<rect x="36.2" y="1495.1" width="37.6" height="14.5" rx="3" fill="none" stroke="#8a8a8a" stroke-width="2.3"/>
<text x="55" y="1506.6" font-family="Liberation Sans" font-weight="bold" font-size="11" fill="#8a8a8a" text-anchor="middle">LOG</text>
<circle cx="40.3" cy="1595" r="3.6" fill="#8a8a8a"/>
<circle cx="55" cy="1595" r="3.6" fill="#8a8a8a"/>
<circle cx="69.3" cy="1595" r="3.6" fill="#8a8a8a"/>
<ellipse cx="150" cy="201.8" rx="10" ry="3" fill="none" stroke="#aaa" stroke-width="1.8"/>
<path d="M140,201.8 V217 A10,3 0 0 0 160,217 V201.8 M140,206.8 A10,3 0 0 0 160,206.8 M140,211.9 A10,3 0 0 0 160,211.9" fill="none" stroke="#aaa" stroke-width="1.8"/>
<ellipse cx="150" cy="273.3" rx="10" ry="3" fill="none" stroke="#fff" stroke-width="1.8"/>
<path d="M140,273.3 V288.5 A10,3 0 0 0 160,288.5 V273.3 M140,278.3 A10,3 0 0 0 160,278.3 M140,283.4 A10,3 0 0 0 160,283.4" fill="none" stroke="#fff" stroke-width="1.8"/>
<ellipse cx="150" cy="344.3" rx="10" ry="3" fill="none" stroke="#aaa" stroke-width="1.8"/>
<path d="M140,344.3 V359.5 A10,3 0 0 0 160,359.5 V344.3 M140,349.3 A10,3 0 0 0 160,349.3 M140,354.4 A10,3 0 0 0 160,354.4" fill="none" stroke="#aaa" stroke-width="1.8"/>
<path d="M534.5,124.8 L527.8,132.2 L534.5,139.6 M541.5,124.8 L534.8,132.2 L541.5,139.6" fill="none" stroke="#ccc" stroke-width="1.8"/>
<path d="M479,556 V577 M468.2,566.5 H489.8" stroke="#e6eefa" stroke-width="1.8"/>
<circle cx="160.2" cy="654.6" r="7.6" fill="none" stroke="#c8c8c8" stroke-width="1.4"/><path d="M165.6,660 L171.5,665.8" stroke="#c8c8c8" stroke-width="1.4"/>
<path d="M140.5,730.5 H163.5 L152,743.5 Z" fill="#ccc"/>
<path d="M140.5,949 H163.5 L152,962 Z" fill="#ccc"/>
<path d="M138.0,800 Q138.0,797 141.0,797 H164.3 Q166.3,797 166.3,799 V823 Q166.3,825.5 163.5,825.5 H162.0" fill="none" stroke="#b4b4b4" stroke-width="1.8"/>
<rect x="134.4" y="802.9" width="27" height="26.6" rx="1.5" fill="#2e2e2e" stroke="#b4b4b4" stroke-width="1.8"/>
<text x="147.9" y="819.8" font-family="Liberation Sans" font-weight="normal" font-size="10" fill="#b4b4b4" text-anchor="middle">API</text>
<path d="M138.0,871.5 Q138.0,868.5 141.0,868.5 H164.3 Q166.3,868.5 166.3,870.5 V894.5 Q166.3,897.0 163.5,897.0 H162.0" fill="none" stroke="#b4b4b4" stroke-width="1.8"/>
<rect x="134.4" y="874.4" width="27" height="26.6" rx="1.5" fill="#2e2e2e" stroke="#b4b4b4" stroke-width="1.8"/>
<text x="147.9" y="891.3" font-family="Liberation Sans" font-weight="normal" font-size="10" fill="#b4b4b4" text-anchor="middle">API</text>
<path d="M143,1043 Q136,1042 136,1033.5 Q136,1025 146,1024.5 Q149.5,1019 156,1019 Q164,1019 166,1028 Q172,1030.5 172,1036 Q172,1043 164,1043 Z" fill="none" stroke="#b4b4b4" stroke-width="1.8" stroke-linejoin="round"/>
<text x="154.5" y="1038" font-family="Liberation Sans" font-weight="bold" font-size="9" fill="#b4b4b4" text-anchor="middle">API</text>
<path d="M143,1114 Q136,1113 136,1104.5 Q136,1096 146,1095.5 Q149.5,1090 156,1090 Q164,1090 166,1099 Q172,1101.5 172,1107 Q172,1114 164,1114 Z" fill="none" stroke="#b4b4b4" stroke-width="1.8" stroke-linejoin="round"/>
<text x="154.5" y="1109" font-family="Liberation Sans" font-weight="bold" font-size="9" fill="#b4b4b4" text-anchor="middle">API</text>
<path d="M143,1185 Q136,1184 136,1175.5 Q136,1167 146,1166.5 Q149.5,1161 156,1161 Q164,1161 166,1170 Q172,1172.5 172,1178 Q172,1185 164,1185 Z" fill="none" stroke="#b4b4b4" stroke-width="1.8" stroke-linejoin="round"/>
<text x="154.5" y="1180" font-family="Liberation Sans" font-weight="bold" font-size="9" fill="#b4b4b4" text-anchor="middle">API</text>
<path d="M468.3,803.6 H499.6 M478.90000000000003,803.6 V801 Q478.90000000000003,798.2 481.7,798.2 H486.2 Q489.0,798.2 489.0,801 V803.6 M474.0,803.6 L475.90000000000003,824.6 Q476.1,826.6 478.1,826.6 H490.0 Q492.0,826.6 492.2,824.6 L494.0,803.6 M481.0,810.2 V821 M487.0,810.2 V821" fill="none" stroke="#a8a8a8" stroke-width="1.9" stroke-linecap="round"/>
<path d="M468.3,874.6 H499.6 M478.90000000000003,874.6 V872 Q478.90000000000003,869.2 481.7,869.2 H486.2 Q489.0,869.2 489.0,872 V874.6 M474.0,874.6 L475.90000000000003,895.6 Q476.1,897.6 478.1,897.6 H490.0 Q492.0,897.6 492.2,895.6 L494.0,874.6 M481.0,881.2 V892 M487.0,881.2 V892" fill="none" stroke="#a8a8a8" stroke-width="1.9" stroke-linecap="round"/>
<path d="M468.3,1022.6 H499.6 M478.90000000000003,1022.6 V1020 Q478.90000000000003,1017.2 481.7,1017.2 H486.2 Q489.0,1017.2 489.0,1020 V1022.6 M474.0,1022.6 L475.90000000000003,1043.6 Q476.1,1045.6 478.1,1045.6 H490.0 Q492.0,1045.6 492.2,1043.6 L494.0,1022.6 M481.0,1029.2 V1040 M487.0,1029.2 V1040" fill="none" stroke="#a8a8a8" stroke-width="1.9" stroke-linecap="round"/>
<path d="M468.3,1093.6 H499.6 M478.90000000000003,1093.6 V1091 Q478.90000000000003,1088.2 481.7,1088.2 H486.2 Q489.0,1088.2 489.0,1091 V1093.6 M474.0,1093.6 L475.90000000000003,1114.6 Q476.1,1116.6 478.1,1116.6 H490.0 Q492.0,1116.6 492.2,1114.6 L494.0,1093.6 M481.0,1100.2 V1111 M487.0,1100.2 V1111" fill="none" stroke="#a8a8a8" stroke-width="1.9" stroke-linecap="round"/>
<path d="M468.3,1164.6 H499.6 M478.90000000000003,1164.6 V1162 Q478.90000000000003,1159.2 481.7,1159.2 H486.2 Q489.0,1159.2 489.0,1162 V1164.6 M474.0,1164.6 L475.90000000000003,1185.6 Q476.1,1187.6 478.1,1187.6 H490.0 Q492.0,1187.6 492.2,1185.6 L494.0,1164.6 M481.0,1171.2 V1182 M487.0,1171.2 V1182" fill="none" stroke="#a8a8a8" stroke-width="1.9" stroke-linecap="round"/>
<path d="M2944,526 L2956,514 L2968,526" fill="none" stroke="#222" stroke-width="2.2"/>
<path d="M2924.5,592.2 L2936,603.7 L2947.5,592.2" fill="none" stroke="#111" stroke-width="2.4"/>
<path d="M2924.5,706.1 L2936,717.6 L2947.5,706.1" fill="none" stroke="#111" stroke-width="2.4"/>
<path d="M2924.5,820.0 L2936,831.5 L2947.5,820.0" fill="none" stroke="#111" stroke-width="2.4"/>
<path d="M2924.5,933.9 L2936,945.4 L2947.5,933.9" fill="none" stroke="#111" stroke-width="2.4"/>
<path d="M2924.5,1047.8 L2936,1059.3 L2947.5,1047.8" fill="none" stroke="#111" stroke-width="2.4"/>
<path d="M2924.5,1161.7 L2936,1173.2 L2947.5,1161.7" fill="none" stroke="#111" stroke-width="2.4"/>
<path d="M2924.5,1275.6 L2936,1287.1 L2947.5,1275.6" fill="none" stroke="#111" stroke-width="2.4"/>
<path d="M2924.5,1389.5 L2936,1401.0 L2947.5,1389.5" fill="none" stroke="#111" stroke-width="2.4"/>
<path d="M2924.5,1503.4 L2936,1514.9 L2947.5,1503.4" fill="none" stroke="#666" stroke-width="2.4"/>
<path d="M2924.5,1617.3 L2936,1628.8 L2947.5,1617.3" fill="none" stroke="#111" stroke-width="2.4"/>
<path d="M2968,409 L2978,399 M2973.5,409 L2978,404.5" stroke="#555" stroke-width="1.4"/></svg>
</body></html>
